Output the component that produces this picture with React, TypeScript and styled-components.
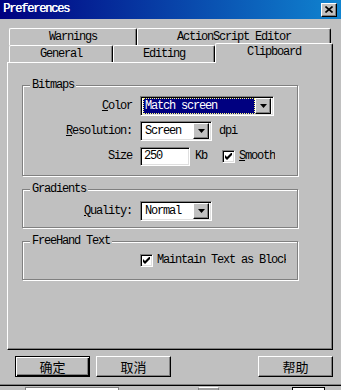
import styled, { createGlobalStyle, css } from 'styled-components';

const GlobalStyle = createGlobalStyle`
  html, body {
    margin: 0;
    padding: 0;
    background: #c0c0c0;
  }
  body {
    font-family: "Liberation Mono", "DejaVu Sans Mono", monospace;
    font-size: 12px;
    letter-spacing: -1.2px;
    color: #000;
    overflow: hidden;
  }
`;

const raised = css`
  border-top: 1px solid #fff;
  border-left: 1px solid #fff;
  border-right: 1px solid #000;
  border-bottom: 1px solid #000;
  box-shadow: inset -1px -1px #808080;
`;

const sunken = css`
  border-top: 1px solid #808080;
  border-left: 1px solid #808080;
  border-right: 1px solid #fff;
  border-bottom: 1px solid #fff;
  box-shadow: inset 1px 1px #000, inset -1px -1px #dfdfdf;
`;

const Window = styled.div`
  width: 341px;
  height: 385px;
  box-sizing: border-box;
  display: flex;
  flex-direction: column;
  background: #c0c0c0;
  border-bottom: 1px solid #808080;
  box-shadow: 0 1px 0 #000;
`;

const TitleBar = styled.div`
  height: 19px;
  flex-shrink: 0;
  display: flex;
  align-items: center;
  justify-content: space-between;
  padding: 0 4px 0 3px;
  background: linear-gradient(90deg, #000080, #1084d0);
`;

const TitleText = styled.span`
  color: #fff;
  line-height: 13px;
  text-shadow: 0.4px 0 0 #fff;
`;

const CloseButton = styled.div`
  width: 16px;
  height: 14px;
  box-sizing: border-box;
  background: #c0c0c0;
  display: flex;
  align-items: center;
  justify-content: center;
  ${raised}
`;

const Body = styled.div`
  padding: 9px 0 0 7px;
  display: flex;
  flex-direction: column;
`;

const TabRow = styled.div`
  display: flex;
  align-items: flex-end;
  height: 17px;
`;

const Tab = styled.div<{ $w: number; $first?: boolean; $active?: boolean }>`
  width: ${({ $w }) => $w}px;
  height: 17px;
  box-sizing: border-box;
  flex-shrink: 0;
  margin-left: ${({ $first }) => ($first ? 2 : 0)}px;
  border-top: 1px solid #fff;
  border-left: 1px solid #fff;
  border-right: 1px solid #000;
  border-radius: 2px 2px 0 0;
  box-shadow: inset -1px 0 #808080;
  background: #c0c0c0;
  text-align: center;
  line-height: 13px;
  padding-top: 2px;

  ${({ $active }) =>
    $active &&
    css`
      height: 20px;
      margin-top: -2px;
      margin-bottom: -1px;
      position: relative;
      z-index: 1;
    `}
`;

const Panel = styled.div`
  width: 326px;
  height: 288px;
  box-sizing: border-box;
  border-top: 1px solid #fff;
  border-left: 1px solid #fff;
  border-right: 1px solid #000;
  border-bottom: 1px solid #000;
  box-shadow: inset -1px -1px #808080;
  padding: 22px 0 0 14px;
  display: flex;
  flex-direction: column;
  gap: 13px;
`;

const Group = styled.div<{ $h: number; $pt: number }>`
  position: relative;
  width: 276px;
  height: ${({ $h }) => $h}px;
  box-sizing: border-box;
  border: 1px solid #808080;
  box-shadow: inset 1px 1px #fff, 1px 1px #fff;
  padding-top: ${({ $pt }) => $pt}px;
`;

const Legend = styled.span`
  position: absolute;
  top: -7px;
  left: 7px;
  padding: 0 2px;
  background: #c0c0c0;
  line-height: 13px;
`;

const FieldGrid = styled.div`
  display: grid;
  grid-template-columns: 109px auto;
  column-gap: 8px;
  row-gap: 5px;
  grid-auto-rows: 20px;
  align-items: center;
`;

const Label = styled.span`
  justify-self: end;
  white-space: nowrap;
  line-height: 13px;
`;

const Controls = styled.div`
  display: flex;
  align-items: center;
`;

const Select = styled.div<{ $w: number }>`
  width: ${({ $w }) => $w}px;
  height: 20px;
  box-sizing: border-box;
  background: #fff;
  display: flex;
  align-items: center;
  padding: 2px;
  ${sunken}
`;

const SelectValue = styled.div<{ $selected?: boolean }>`
  flex: 1;
  height: 16px;
  box-sizing: border-box;
  line-height: 14px;
  padding-left: 1px;
  white-space: nowrap;
  overflow: hidden;
  border: 1px solid transparent;

  ${({ $selected }) =>
    $selected &&
    css`
      background: #000080;
      color: #fff;
      border: 1px dotted #ffff80;
    `}
`;

const ArrowButton = styled.div`
  width: 16px;
  height: 16px;
  box-sizing: border-box;
  background: #c0c0c0;
  display: flex;
  align-items: center;
  justify-content: center;
  ${raised}
`;

const TextInput = styled.div`
  width: 50px;
  height: 19px;
  box-sizing: border-box;
  background: #fff;
  padding-left: 3px;
  line-height: 17px;
  ${sunken}
`;

const Unit = styled.span<{ $gap: number }>`
  margin-left: ${({ $gap }) => $gap}px;
  line-height: 13px;
`;

const CheckBox = styled.div<{ $gap?: number }>`
  width: 13px;
  height: 13px;
  box-sizing: border-box;
  flex-shrink: 0;
  margin-left: ${({ $gap }) => $gap ?? 0}px;
  background: #fff;
  display: flex;
  align-items: center;
  justify-content: center;
  ${sunken}
`;

const CheckLabel = styled.span<{ $w?: number }>`
  margin-left: 4px;
  line-height: 13px;
  white-space: nowrap;
  overflow: hidden;
  ${({ $w }) => $w && `width: ${$w}px;`}
`;

const ButtonRow = styled.div`
  display: flex;
  width: 326px;
  margin-top: 6px;
  gap: 6px;
`;

const Button = styled.div<{ $default?: boolean; $right?: boolean }>`
  width: 75px;
  height: 21px;
  box-sizing: border-box;
  display: flex;
  align-items: center;
  justify-content: center;
  font-family: "Noto Sans CJK SC", "Noto Sans", sans-serif;
  font-size: 13px;
  letter-spacing: 0;
  ${raised}
  margin-left: ${({ $right }) => ($right ? 'auto' : '0')};

  &:first-child {
    margin-left: 8px;
  }

  ${({ $default }) =>
    $default &&
    css`
      border: 1px solid #000;
      box-shadow: inset 1px 1px #fff, inset -1px -1px #000, inset -2px -2px #808080;
    `}
`;

const Behind = styled.div`
  height: 4px;
  margin-top: 1px;
  display: flex;
  align-items: flex-end;
`;

const BehindBox = styled.div<{ $x: number; $w: number; $kind: 'field' | 'gray' | 'dark' }>`
  margin-left: ${({ $x }) => $x}px;
  width: ${({ $w }) => $w}px;
  height: 2px;
  border-top: 1px solid ${({ $kind }) => ($kind === 'dark' ? '#000' : $kind === 'gray' ? '#fff' : '#808080')};
  border-left: 1px solid ${({ $kind }) => ($kind === 'dark' ? '#000' : '#808080')};
  border-right: 1px solid ${({ $kind }) => ($kind === 'dark' ? '#000' : '#808080')};
  background: ${({ $kind }) => ($kind === 'gray' ? '#a0a0a0' : '#fff')};
`;

const Arrow = () => (
  <svg width="7" height="4" viewBox="0 0 7 4">
    <polygon points="0,0 7,0 3.5,4" fill="#000" />
  </svg>
);

const Check = () => (
  <svg width="7" height="7" viewBox="0 0 7 7">
    <polygon points="0,2 2,4 7,-1 7,2 2,7 0,5" fill="#000" />
  </svg>
);

const Dropdown = ({ w, value, selected }: { w: number; value: string; selected?: boolean }) => (
  <Select $w={w}>
    <SelectValue $selected={selected}>{value}</SelectValue>
    <ArrowButton>
      <Arrow />
    </ArrowButton>
  </Select>
);

export default function App() {
  return (
    <>
      <GlobalStyle />
      <Window>
        <TitleBar>
          <TitleText>Preferences</TitleText>
          <CloseButton>
            <svg width="8" height="7" viewBox="0 0 8 7">
              <path d="M0.5 0.5 L7.5 6.5 M7.5 0.5 L0.5 6.5" stroke="#000" strokeWidth="1.6" />
            </svg>
          </CloseButton>
        </TitleBar>

        <Body>
          <TabRow>
            <Tab $w={128} $first>Warnings</Tab>
            <Tab $w={194}>ActionScript Editor</Tab>
          </TabRow>
          <TabRow>
            <Tab $w={104} $first>General</Tab>
            <Tab $w={102}>Editing</Tab>
            <Tab $w={118} $active>Clipboard</Tab>
          </TabRow>

          <Panel>
            <Group $h={91} $pt={10}>
              <Legend>Bitmaps</Legend>
              <FieldGrid>
                <Label>
                  <u>C</u>olor
                </Label>
                <Controls>
                  <Dropdown w={134} value="Match screen" selected />
                </Controls>

                <Label>
                  <u>R</u>esolution:
                </Label>
                <Controls>
                  <Dropdown w={72} value="Screen" />
                  <Unit $gap={7}>dpi</Unit>
                </Controls>

                <Label>Size</Label>
                <Controls>
                  <TextInput>250</TextInput>
                  <Unit $gap={5}>Kb</Unit>
                  <CheckBox $gap={15}>
                    <Check />
                  </CheckBox>
                  <CheckLabel>
                    <u>S</u>mooth
                  </CheckLabel>
                </Controls>
              </FieldGrid>
            </Group>

            <Group $h={39} $pt={11}>
              <Legend>Gradients</Legend>
              <FieldGrid>
                <Label>
                  <u>Q</u>uality:
                </Label>
                <Controls>
                  <Dropdown w={72} value="Normal" />
                </Controls>
              </FieldGrid>
            </Group>

            <Group $h={39} $pt={8}>
              <Legend>FreeHand Text</Legend>
              <FieldGrid>
                <span />
                <Controls>
                  <CheckBox>
                    <Check />
                  </CheckBox>
                  <CheckLabel $w={129}>Maintain Text as Block</CheckLabel>
                </Controls>
              </FieldGrid>
            </Group>
          </Panel>

          <ButtonRow>
            <Button $default>确定</Button>
            <Button>取消</Button>
            <Button $right>帮助</Button>
          </ButtonRow>
        </Body>
      </Window>
      <Behind>
        <BehindBox $x={25} $w={92} $kind="field" />
        <BehindBox $x={79} $w={19} $kind="gray" />
        <BehindBox $x={73} $w={31} $kind="dark" />
      </Behind>
    </>
  );
}
